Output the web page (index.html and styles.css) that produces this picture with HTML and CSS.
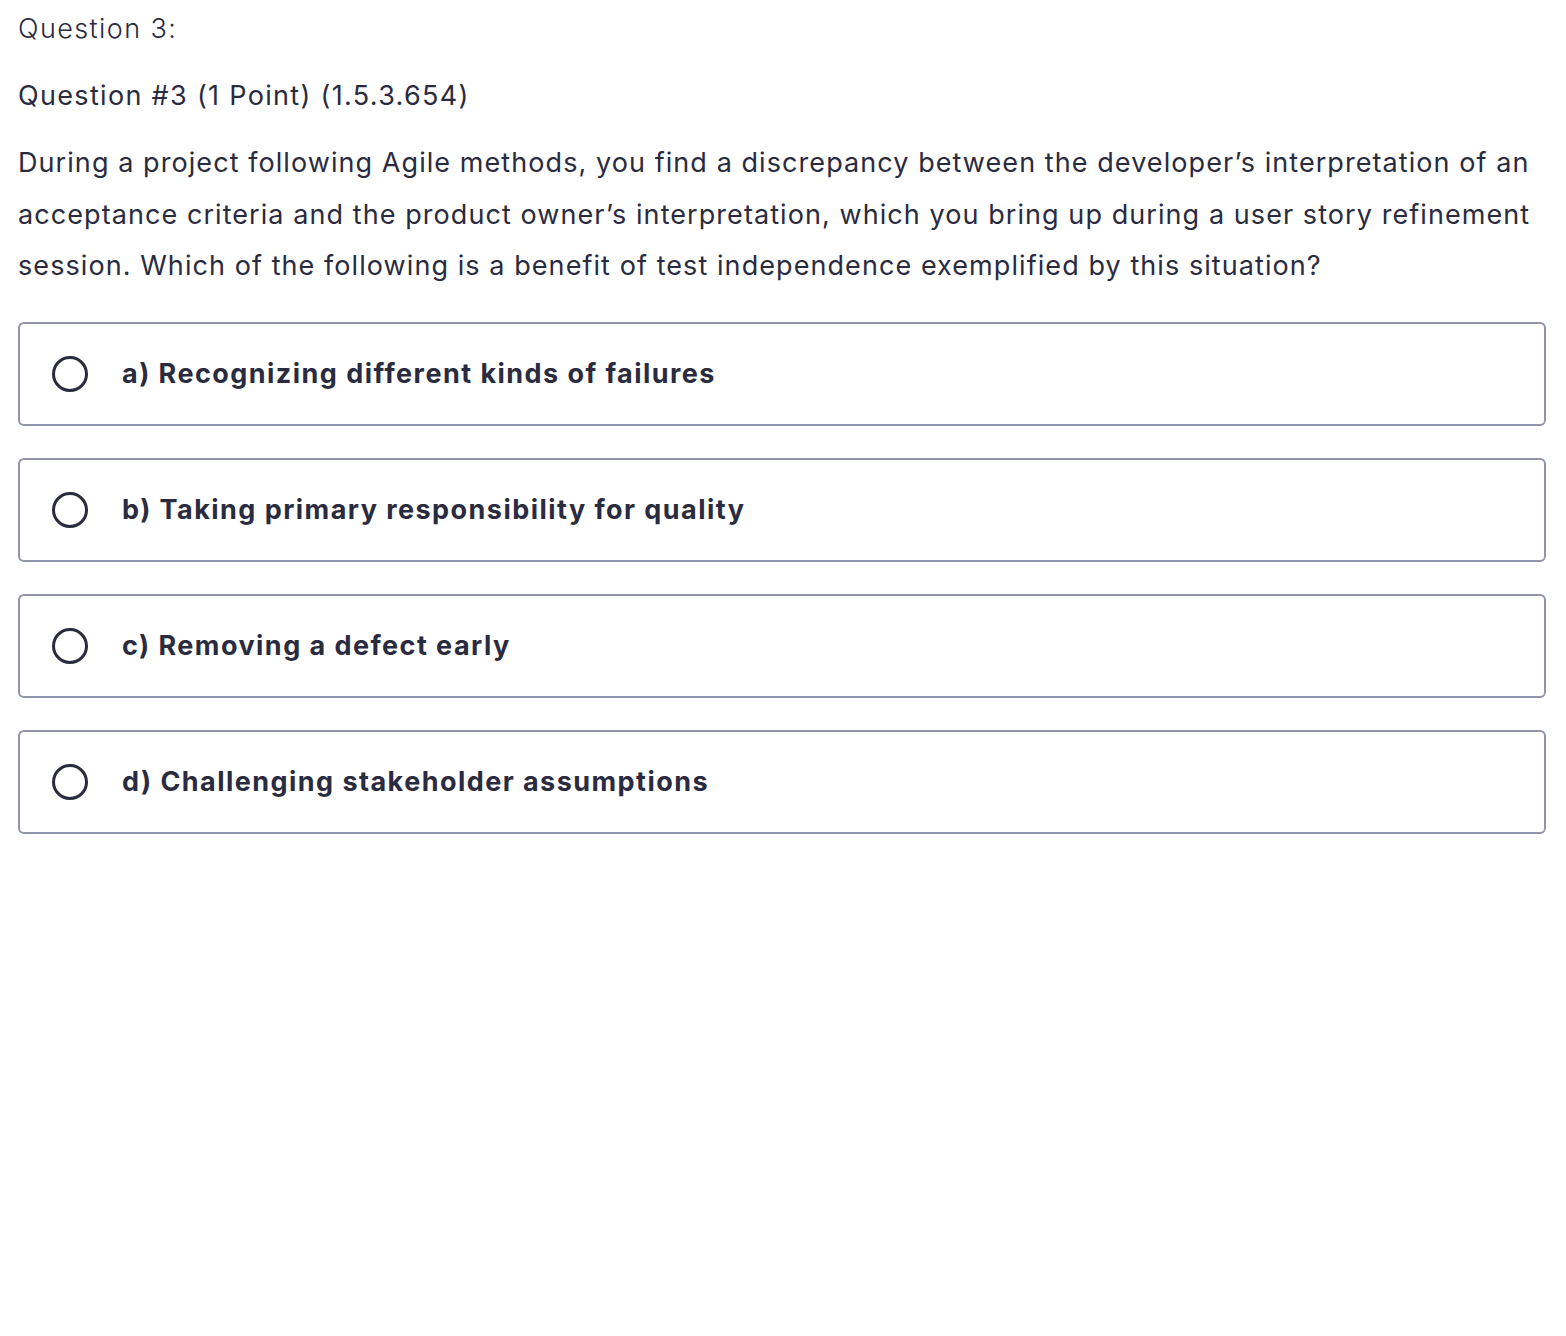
FILE: index.html
```html
<!DOCTYPE html>
<html lang="en">
<head>
<meta charset="utf-8">
<title>Question 3</title>
<link rel="stylesheet" href="styles.css">
</head>
<body>
<main class="quiz">
  <div class="q-label">Question 3:</div>
  <div class="q-id">Question #3 (1 Point) (1.5.3.654)</div>
  <p class="q-prompt">During a project following Agile methods, you find a discrepancy between the developer’s interpretation of an acceptance criteria and the product owner’s interpretation, which you bring up during a user story refinement session. Which of the following is a benefit of test independence exemplified by this situation?</p>
  <ul class="answers">
    <li class="answer"><span class="radio"></span><span class="answer-text">a) Recognizing different kinds of failures</span></li>
    <li class="answer"><span class="radio"></span><span class="answer-text">b) Taking primary responsibility for quality</span></li>
    <li class="answer"><span class="radio"></span><span class="answer-text">c) Removing a defect early</span></li>
    <li class="answer"><span class="radio"></span><span class="answer-text">d) Challenging stakeholder assumptions</span></li>
  </ul>
</main>
</body>
</html>
```
FILE: styles.css
```css
html, body {
  margin: 0;
  padding: 0;
  background: #ffffff;
}
body {
  font-family: Inter, "Liberation Sans", Arial, sans-serif;
  color: #2a2b3f;
}
.quiz {
  padding: 9px 20px 0 18px;
}
.q-label {
  font-size: 27px;
  line-height: 40px;
  font-weight: 300;
  letter-spacing: 1.4px;
}
.q-id {
  font-size: 27px;
  line-height: 40px;
  margin-top: 27px;
  letter-spacing: 1.32px;
}
.q-prompt {
  font-size: 27px;
  line-height: 51.5px;
  margin: 21px 0 0 0;
  letter-spacing: 1.07px;
}
.answers {
  list-style: none;
  margin: 30px 0 0 0;
  padding: 0;
  display: flex;
  flex-direction: column;
  gap: 32px;
}
.answer {
  height: 104px;
  box-sizing: border-box;
  border: 2px solid #9194ac;
  border-radius: 6px;
  display: flex;
  align-items: center;
  padding-left: 32px;
}
.radio {
  width: 36px;
  height: 36px;
  box-sizing: border-box;
  border: 3px solid #2a2b3f;
  border-radius: 50%;
  flex: none;
}
.answer-text {
  margin-left: 34px;
  font-size: 27px;
  font-weight: 700;
  letter-spacing: 1.45px;
}
```
